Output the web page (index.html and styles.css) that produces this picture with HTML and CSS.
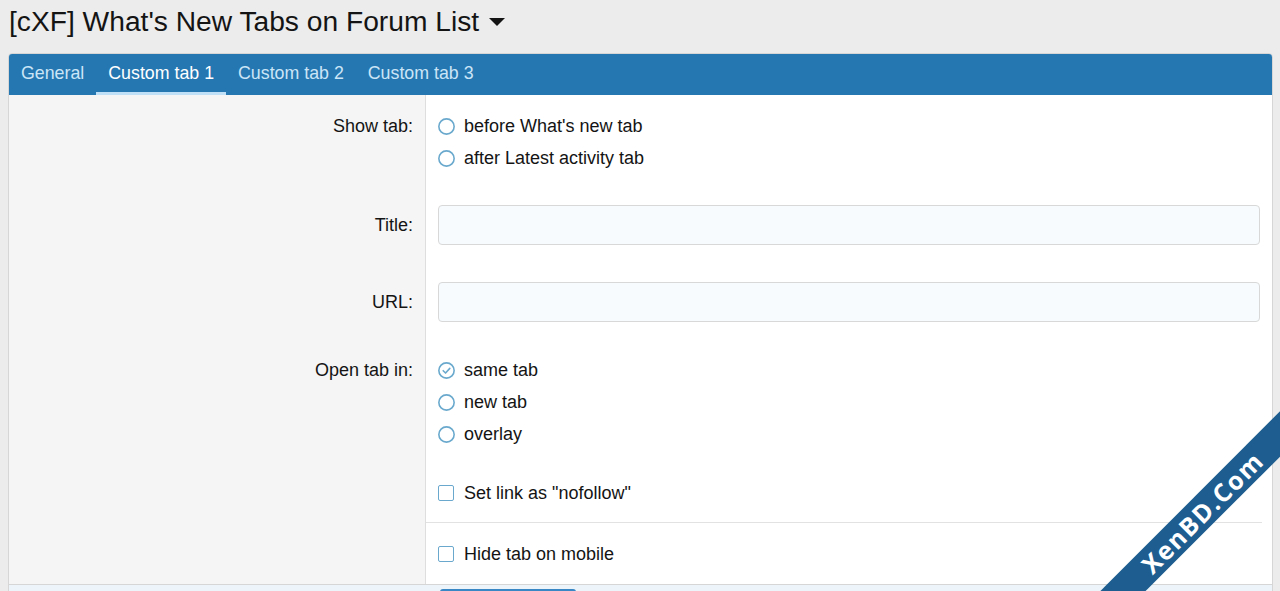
FILE: index.html
```html
<!DOCTYPE html>
<html>
<head>
    <title>[cXF] What's New Tabs on Forum List</title>
    <link rel="stylesheet" href="styles.css">
</head>
<body>

    <h1 class="page-title">[cXF] What's New Tabs on Forum List <span class="caret"></span></h1>

    <div class="block">
        <div class="tabs">
            <a class="tab">General</a>
            <a class="tab is-active">Custom tab 1</a>
            <a class="tab">Custom tab 2</a>
            <a class="tab">Custom tab 3</a>
        </div>

        <div class="block-body">
            <dl class="form-row row-show">
                <dt>Show tab:</dt>
                <dd>
                    <ul class="choices">
                        <li><svg class="radio" viewBox="0 0 16 16"><circle cx="8" cy="8" r="7.2"/></svg>before What's new tab</li>
                        <li><svg class="radio" viewBox="0 0 16 16"><circle cx="8" cy="8" r="7.2"/></svg>after Latest activity tab</li>
                    </ul>
                </dd>
            </dl>

            <dl class="form-row row-title">
                <dt class="input-label">Title:</dt>
                <dd><input class="input" type="text"></dd>
            </dl>

            <dl class="form-row row-url">
                <dt class="input-label">URL:</dt>
                <dd><input class="input" type="text"></dd>
            </dl>

            <dl class="form-row row-open">
                <dt>Open tab in:</dt>
                <dd>
                    <ul class="choices">
                        <li><svg class="radio" viewBox="0 0 16 16"><circle cx="8" cy="8" r="7.2"/><path d="M4.9 8.2l2.2 2.2 4-4.4"/></svg>same tab</li>
                        <li><svg class="radio" viewBox="0 0 16 16"><circle cx="8" cy="8" r="7.2"/></svg>new tab</li>
                        <li><svg class="radio" viewBox="0 0 16 16"><circle cx="8" cy="8" r="7.2"/></svg>overlay</li>
                    </ul>
                </dd>
            </dl>

            <dl class="form-row row-nofollow">
                <dt></dt>
                <dd>
                    <ul class="choices">
                        <li><span class="check"></span>Set link as "nofollow"</li>
                    </ul>
                </dd>
            </dl>

            <dl class="form-row row-mobile">
                <dt></dt>
                <dd>
                    <ul class="choices">
                        <li><span class="check"></span>Hide tab on mobile</li>
                    </ul>
                </dd>
            </dl>
        </div>

        <div class="submit-row">
            <button class="button" aria-label="Save"></button>
        </div>
    </div>

    <!-- watermark -->
    <div class="ribbon">XenBD.Com</div>

</body>
</html>
```

FILE: styles.css
```css
html {
    overflow: hidden;
}
body {
    margin: 0;
    padding: 0 7px 0 8px;
    background: #ececec;
    color: #141414;
    font-family: 'Liberation Sans', Arial, sans-serif;
    font-size: 18px;
}
.page-title {
    margin: 4px 0 0 1px;
    font-size: 28.2px;
    font-weight: normal;
    line-height: 34px;
    height: 49px;
}
.caret {
    display: inline-block;
    width: 0;
    height: 0;
    border-left: 8px solid transparent;
    border-right: 8px solid transparent;
    border-top: 8px solid #141414;
    vertical-align: 5px;
    margin-left: 2px;
}

.block {
    border: 1px solid #d6d6d6;
    border-radius: 4px 4px 0 0;
    background: #fff;
}
.tabs {
    display: flex;
    background: #2577b1;
    border-radius: 3px 3px 0 0;
    height: 41px;
}
.tab {
    display: block;
    padding: 0 12px;
    line-height: 39px;
    font-size: 17.8px;
    color: #cbe5f7;
    border-bottom: 3px solid transparent;
    cursor: pointer;
}
.tab.is-active {
    color: #fff;
    border-bottom-color: #bfe0f6;
}

.block-body {
    border-bottom: 1px solid #d6d6d6;
}
.form-row {
    display: grid;
    grid-template-columns: 417px 1fr;
    margin: 0;
}
.form-row dt {
    background: #f5f5f5;
    border-right: 1px solid #dedede;
    text-align: right;
    padding: 15px 12px 15px 0;
    line-height: 32px;
}
.form-row dd {
    margin: 0;
    padding: 15px 12px 15px 12px;
}
.form-row dt.input-label {
    line-height: 40px;
}

.row-title dt, .row-title dd { padding-top: 16px; padding-bottom: 18px; }
.row-url dt, .row-url dd { padding-top: 19px; padding-bottom: 16px; }
.row-open dt, .row-open dd { padding-top: 16px; padding-bottom: 16px; }
.row-nofollow dt, .row-nofollow dd { padding-top: 11px; padding-bottom: 13px; }
.row-mobile dt, .row-mobile dd { padding-top: 15px; padding-bottom: 14px; }
.row-mobile dd {
    border-top: 1px solid #e2e2e2;
    margin-right: 10px;
}

.choices {
    list-style: none;
    margin: 0;
    padding: 0;
}
.choices li {
    display: flex;
    align-items: center;
    height: 32px;
}
.radio {
    width: 17px;
    height: 17px;
    margin-right: 9px;
    flex: none;
}
.radio circle {
    fill: #fff;
    stroke: #6aa9cd;
    stroke-width: 1.5;
}
.radio path {
    fill: none;
    stroke: #6aa9cd;
    stroke-width: 1.5;
    stroke-linecap: round;
    stroke-linejoin: round;
}
.check {
    box-sizing: border-box;
    width: 16px;
    height: 16px;
    border: 1.5px solid #6aa9cd;
    border-radius: 2px;
    margin-right: 10px;
    flex: none;
}

.input {
    display: block;
    box-sizing: border-box;
    width: 100%;
    height: 40px;
    border: 1px solid #d8d8d8;
    border-radius: 4px;
    background: #f8fbfd;
}

.submit-row {
    background: #edf5fb;
    padding: 4px 0 10px 431px;
}
.button {
    display: block;
    width: 136px;
    height: 36px;
    border: none;
    border-radius: 3px;
    background: #3987c4;
}

/* watermark */
.ribbon {
    position: absolute;
    left: 992px;
    top: 496px;
    width: 420px;
    height: 32px;
    line-height: 32px;
    background: #1d5d8f;
    color: #fff;
    text-align: center;
    font-family: 'Open Sans', sans-serif;
    font-weight: bold;
    font-size: 25px;
    letter-spacing: 1.5px;
    transform: rotate(-45deg);
}
```
